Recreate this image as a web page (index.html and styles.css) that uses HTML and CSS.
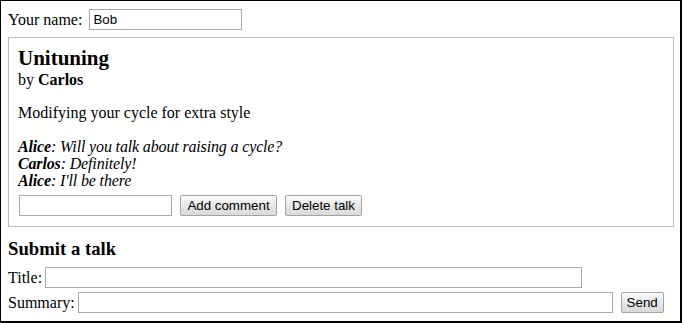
FILE: index.html
```html
<!DOCTYPE html>
<html>
<head>
<meta charset="utf-8">
<link rel="stylesheet" href="styles.css">
</head>
<body>
<div class="frame">
  <div class="name-row">
    <label class="label">Your name:</label>
    <input class="field name-input" type="text" value="Bob">
  </div>
  <div class="talk">
    <h2 class="talk-title">Unituning</h2>
    <div class="talk-by">by <strong>Carlos</strong></div>
    <p class="talk-summary">Modifying your cycle for extra style</p>
    <div class="comments">
      <div class="comment"><strong>Alice</strong>: Will you talk about raising a cycle?</div>
      <div class="comment"><strong>Carlos</strong>: Definitely!</div>
      <div class="comment"><strong>Alice</strong>: I'll be there</div>
    </div>
    <form class="comment-form">
      <input class="field comment-input" type="text">
      <button class="btn add-btn" type="button">Add comment</button>
      <button class="btn delete-btn" type="button">Delete talk</button>
    </form>
  </div>
  <h3 class="submit-title">Submit a talk</h3>
  <form class="submit-form">
    <div class="form-row">
      <label class="label">Title:</label>
      <input class="field title-input" type="text">
    </div>
    <div class="form-row">
      <label class="label">Summary:</label>
      <input class="field summary-input" type="text">
      <button class="btn send-btn" type="button">Send</button>
    </div>
  </form>
</div>
</body>
</html>
```
FILE: styles.css
```css
html, body {
  margin: 0;
  padding: 0;
  background: #fff;
}

body {
  font-family: "Liberation Serif", "Times New Roman", serif;
  font-size: 16px;
  color: #000;
}

.frame {
  box-sizing: border-box;
  width: 682px;
  height: 323px;
  border-style: solid;
  border-color: #000;
  border-width: 1px 2px 2px 1px;
  padding: 7px 6px 0 7px;
  overflow: hidden;
}

.label {
  line-height: 18px;
}

.field {
  box-sizing: border-box;
  height: 21px;
  margin: 0;
  padding: 1px 3px;
  border: 1px solid #a9a9a9;
  border-radius: 0;
  background: #fff;
  font-family: "Liberation Sans", Arial, sans-serif;
  font-size: 13.33px;
  color: #000;
  outline: none;
}

.btn {
  box-sizing: border-box;
  height: 21px;
  margin: 0;
  padding: 0;
  border: 1px solid #a3a3a3;
  border-radius: 2px;
  background: linear-gradient(#fbfbfb, #e4e4e4 60%, #dadada);
  font-family: "Liberation Sans", Arial, sans-serif;
  font-size: 13.33px;
  color: #000;
  text-align: center;
}

.name-row {
  display: flex;
  align-items: center;
  gap: 7px;
  height: 21px;
  padding-top: 1px;
  margin-bottom: 7px;
}

.name-input {
  width: 153px;
}

.talk {
  border: 1px solid #bbb;
  padding: 8px 9px 10px 9px;
}

.talk-title {
  margin: 0;
  font-size: 21px;
  line-height: 24px;
  font-weight: bold;
}

.talk-by {
  line-height: 19px;
}

.talk-summary {
  margin: 15px 0 16px 0;
  line-height: 18px;
}

.comments {
  font-style: italic;
  line-height: 17px;
  letter-spacing: -0.15px;
}

.comment-form {
  display: flex;
  align-items: center;
  gap: 8px;
  margin: 6px 0 0 0;
  padding-left: 1px;
}

.comment-input {
  width: 153px;
}

.add-btn {
  width: 97px;
}

.delete-btn {
  width: 77px;
}

.submit-title {
  margin: 11px 0 8px 0;
  font-size: 18.72px;
  line-height: 21px;
  font-weight: bold;
}

.submit-form {
  margin: 0;
}

.form-row {
  display: flex;
  align-items: center;
  gap: 3px;
  height: 21px;
  margin-bottom: 4px;
}

.title-input {
  width: 537px;
}

.summary-input {
  width: 535px;
  margin-right: 5px;
}

.send-btn {
  width: 43px;
}
```
